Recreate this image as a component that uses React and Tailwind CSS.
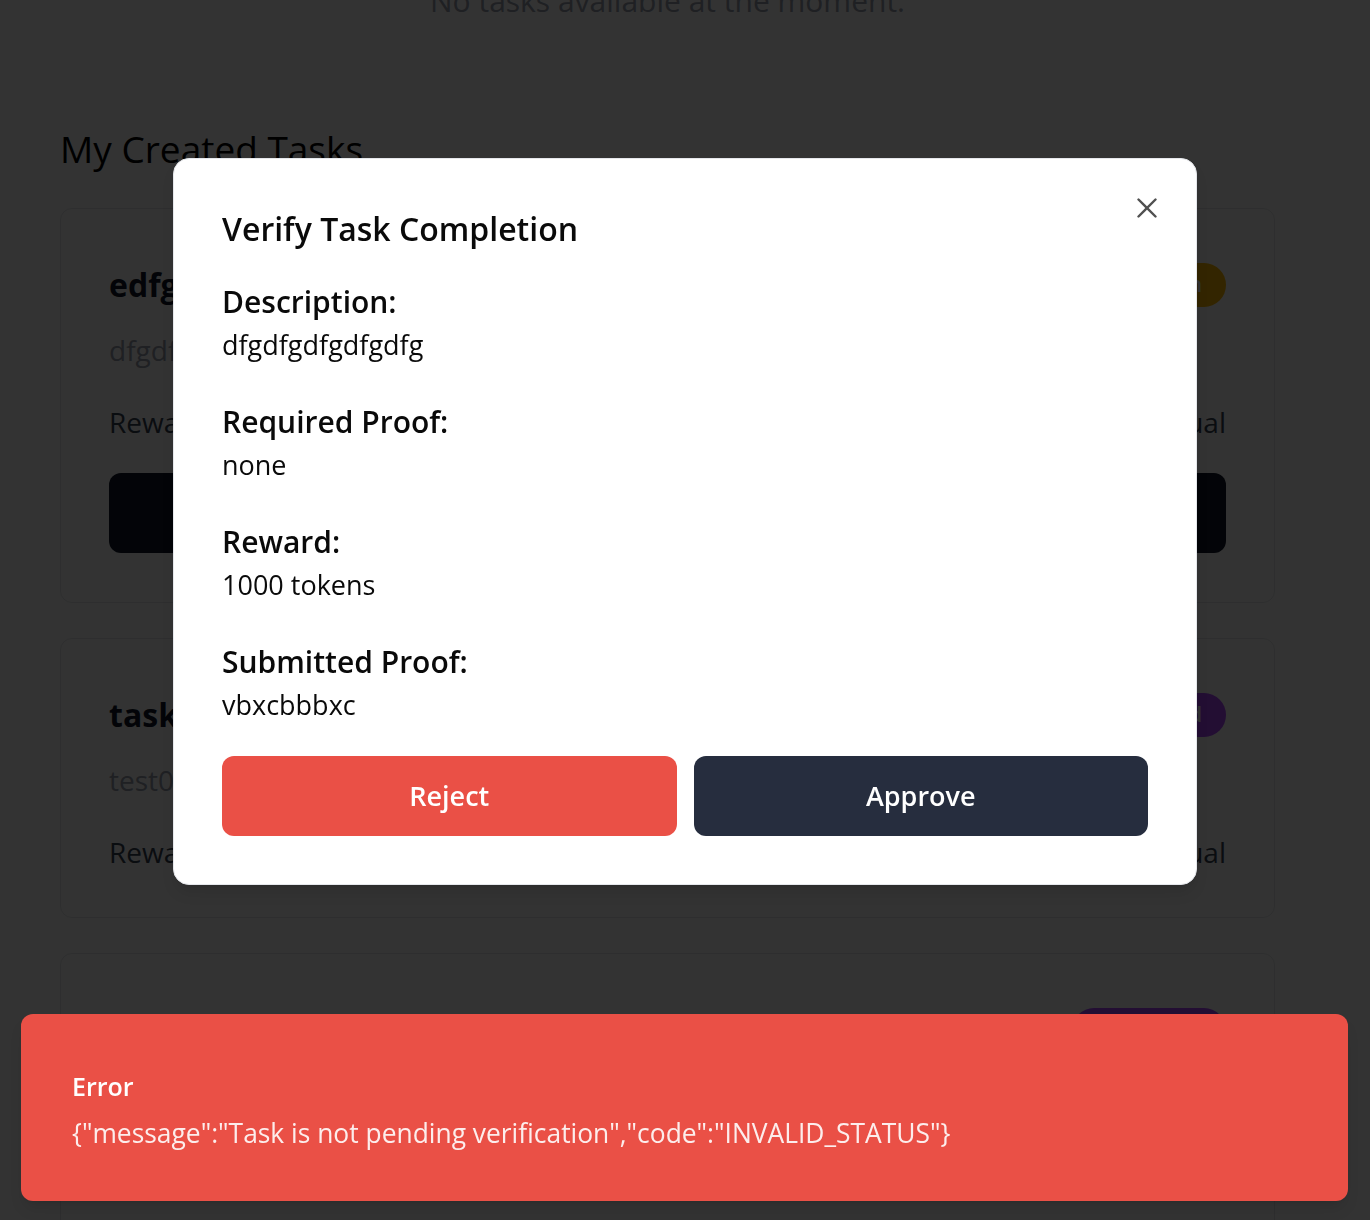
import React from "react";

const tasks = [
  {
    id: 1,
    title: "edfgdfg",
    description: "dfgdfgdfgdfgdfg",
    reward: 1000,
    verification: "Manual",
    status: "Open",
    badge: "bg-amber-400",
    action: "View Submissions",
  },
  {
    id: 2,
    title: "task 2",
    description: "test001",
    reward: 500,
    verification: "Manual",
    status: "Submitted",
    badge: "bg-purple-500",
  },
  {
    id: 3,
    title: "task 3",
    description: "test002",
    reward: 250,
    verification: "Manual",
    status: "Submitted",
    badge: "bg-purple-500",
  },
];

function TaskCard({ task }) {
  return (
    <div className="rounded-xl border border-gray-200 bg-white p-12 pb-[49px]">
      {/* header */}
      <div className="flex h-[56px] items-center justify-between">
        <h3 className="text-[32px] font-bold leading-[40px] text-gray-900">
          {task.title}
        </h3>
        <span
          className={`${task.badge} flex h-[44px] items-center rounded-full px-6 text-[21px] font-semibold text-white`}
        >
          {task.status}
        </span>
      </div>

      <p className="mt-[21px] text-[28px] leading-[32px] text-gray-400">
        {task.description}
      </p>

      <div className="mt-[40px] flex justify-between text-[28px] leading-[32px] text-gray-700">
        <span>Reward: {task.reward} tokens</span>
        <span>Verification: {task.verification}</span>
      </div>

      {task.action && (
        <button className="mt-[35px] h-[80px] w-full rounded-xl bg-gray-900 text-[27px] font-semibold text-white">
          {task.action}
        </button>
      )}
    </div>
  );
}

function Field({ label, value, first }) {
  return (
    <div className={first ? "mt-[35px]" : "mt-[41px]"}>
      <h4 className="text-[30px] font-semibold leading-[36px] text-[#0a0a0a]">
        {label}
      </h4>
      <p className="mt-[7px] text-[27px] leading-[36px] text-[#0a0a0a]">
        {value}
      </p>
    </div>
  );
}

function VerifyDialog() {
  return (
    <div className="fixed inset-0 flex justify-center pt-[158px]">
      <div className="relative h-fit w-[1024px] rounded-2xl border border-gray-200 bg-white p-12 shadow-lg">
        <button className="absolute right-[39px] top-[39px] flex h-5 w-5 items-center justify-center text-[#505050]">
          <svg width="20" height="20" viewBox="0 0 20 20" fill="none">
            <path
              d="M1.5 1.5L18.5 18.5M18.5 1.5L1.5 18.5"
              stroke="currentColor"
              strokeWidth="2.4"
              strokeLinecap="round"
            />
          </svg>
        </button>

        <h2 className="mt-[2px] text-[32px] font-semibold leading-[40px] text-[#0a0a0a]">
          Verify Task Completion
        </h2>

        <Field first label="Description:" value="dfgdfgdfgdfgdfg" />
        <Field label="Required Proof:" value="none" />
        <Field label="Reward:" value="1000 tokens" />
        <Field label="Submitted Proof:" value="vbxcbbbxc" />

        <div className="mt-[33px] grid grid-cols-2 gap-[17px]">
          <button className="h-[80px] rounded-xl bg-[#ea5046] text-[27px] font-semibold text-white">
            Reject
          </button>
          <button className="h-[80px] rounded-xl bg-[#262d3e] text-[27px] font-semibold text-white">
            Approve
          </button>
        </div>
      </div>
    </div>
  );
}

function ErrorToast() {
  return (
    <div className="fixed left-[21px] top-[1014px] flex h-[187px] w-[1327px] flex-col justify-center rounded-xl bg-[#ea5046] px-[51px] pt-[4px] text-white shadow-lg">
      <div className="text-[25px] font-semibold leading-[36px]">Error</div>
      <div className="mt-[11px] text-[26.4px] leading-[36px] opacity-90">
        {'{"message":"Task is not pending verification","code":"INVALID_STATUS"}'}
      </div>
    </div>
  );
}

export default function App() {
  return (
    <div className="flex min-h-screen flex-col overflow-hidden bg-white font-['Open_Sans',sans-serif]">
      <div className="ml-[60px] flex w-[1215px] flex-col">
        <p className="mt-[-19px] text-center text-[30px] leading-[40px] text-gray-400">
          No tasks available at the moment.
        </p>

        <h2 className="mt-[104px] text-[37px] font-medium leading-[48px] text-black">
          My Created Tasks
        </h2>

        <div className="mt-[35px] flex flex-col gap-[35px] pb-10">
          {tasks.map((task) => (
            <TaskCard key={task.id} task={task} />
          ))}
        </div>
      </div>

      {/* overlay */}
      <div className="fixed inset-0 bg-black/80" />
      <VerifyDialog />
      <ErrorToast />
    </div>
  );
}
